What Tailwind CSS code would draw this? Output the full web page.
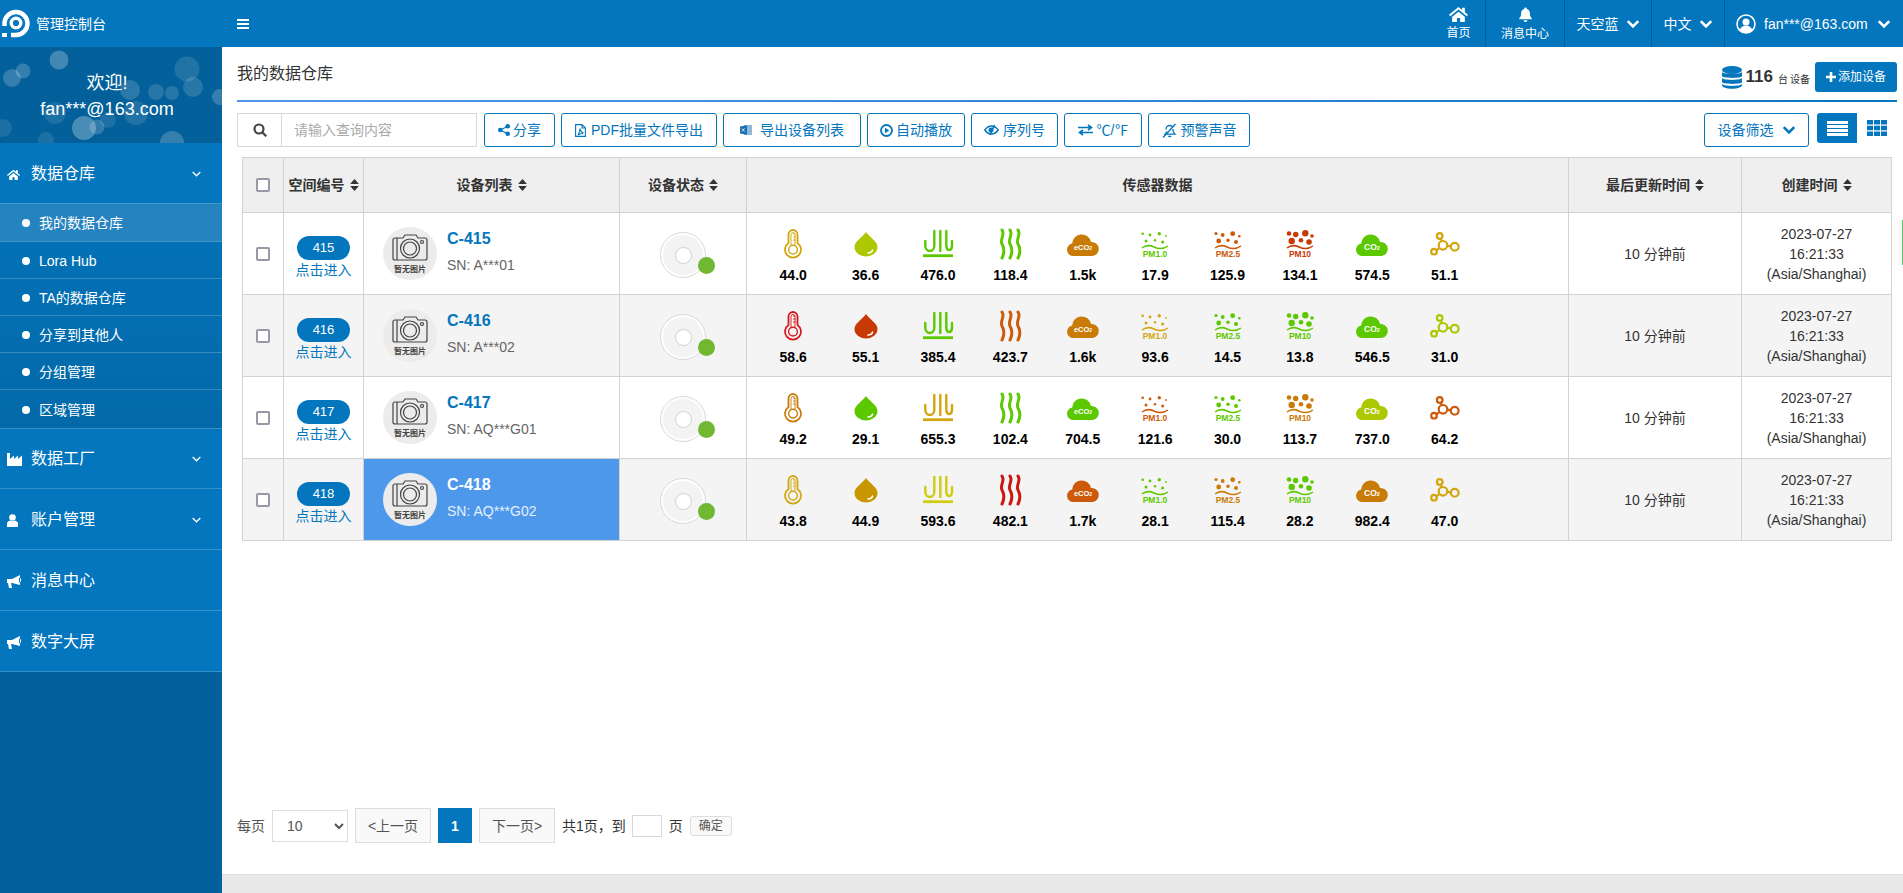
<!DOCTYPE html>
<html lang="zh-CN">
<head>
    <meta charset="UTF-8">
    <meta name="viewport" content="width=device-width, initial-scale=1.0">
    <title>管理控制台</title>
    <script src="https://cdn.jsdelivr.net/npm/@tailwindcss/browser@4"></script>
</head>
<body class="h-screen overflow-hidden flex flex-col bg-white text-sm text-[#333] font-['Liberation_Sans','Noto_Sans_CJK_SC',sans-serif]">

    <!-- sensor icons, coloured through currentColor -->
    <svg class="hidden" xmlns="http://www.w3.org/2000/svg">
        <symbol id="i-temp" viewBox="0 0 36 36">
            <path d="M13.5 17V8.5a4.5 4.5 0 0 1 9 0V17a8 8 0 1 1-9 0z" fill="none" stroke="currentColor" stroke-width="1.8"/>
            <circle cx="18" cy="23.6" r="4.4" fill="none" stroke="currentColor" stroke-width="1.4"/>
            <path d="M16 19V8.5a2 2 0 0 1 4 0V19M18 8h2.5M18 11h2.5M18 14h2.5" fill="none" stroke="currentColor" stroke-width=".9"/>
        </symbol>
        <symbol id="i-drop" viewBox="0 0 36 36">
            <path d="M18 6C15 11 6.500 15 6.500 21a11.500 9.500 0 0 0 23 0C29.500 15 21 11 18 6z" fill="currentColor"/>
            <path d="M20 27c2 0 3.800-.8 4.600-2.800" fill="none" stroke="#fff" stroke-width="1.600" stroke-linecap="round"/>
        </symbol>
        <symbol id="i-tvoc" viewBox="0 0 36 36">
            <path d="M14.300 5v15a4.500 5 0 0 1-9 0v-5M20.300 5v20M26.300 5v15a2.900 5 0 0 0 5.700 0v-5" fill="none" stroke="currentColor" stroke-width="2.400" stroke-linecap="round"/>
            <rect x="3" y="28.300" width="30" height="2.800" fill="currentColor"/>
        </symbol>
        <symbol id="i-heat" viewBox="0 0 36 36">
            <path d="M10 4c3.500 4.500-2.500 9 0 14 2.500 4.500 2.500 9 0 14M18 4c3.500 4.500-2.500 9 0 14 2.500 4.500 2.500 9 0 14M26 4c3.500 4.500-2.500 9 0 14 2.500 4.500 2.500 9 0 14" fill="none" stroke="currentColor" stroke-width="3" stroke-linecap="round"/>
        </symbol>
        <symbol id="i-eco2" viewBox="0 0 36 36">
            <path d="M8.500 30a6.300 6.300 0 0 1-1.300-12.500A9.500 9.500 0 0 1 26 16a7 7 0 0 1 1.500 14z" fill="currentColor"/>
            <text x="18" y="24" text-anchor="middle" fill="#fff" font-size="7.500" font-weight="700">eCO<tspan font-size="5">2</tspan></text>
        </symbol>
        <symbol id="i-co2" viewBox="0 0 36 36">
            <path d="M8.500 30a6.300 6.300 0 0 1-1.300-12.500A9.500 9.500 0 0 1 26 16a7 7 0 0 1 1.500 14z" fill="currentColor"/>
            <text x="18" y="24" text-anchor="middle" fill="#fff" font-size="8.500" font-weight="700">CO<tspan font-size="5.500">2</tspan></text>
        </symbol>
        <symbol id="i-pm1" viewBox="0 0 36 36">
            <g fill="currentColor"><circle cx="5.700" cy="7.700" r="1.300"/><circle cx="13" cy="9" r="1.400"/><circle cx="22.300" cy="7.700" r="1.700"/><circle cx="29" cy="10" r=".9"/><circle cx="9" cy="15" r="1.500"/><circle cx="18" cy="14.300" r="1.200"/><circle cx="25.700" cy="16" r="1.500"/></g>
            <path d="M5 22c4-3 8-3 12-1s9 2.500 14-1" fill="none" stroke="currentColor" stroke-width="1.500"/>
            <text x="18" y="31" text-anchor="middle" fill="currentColor" font-size="8.500" font-weight="700">PM1.0</text>
        </symbol>
        <symbol id="i-pm25" viewBox="0 0 36 36">
            <g fill="currentColor"><circle cx="6" cy="7.500" r="1.600"/><circle cx="12.700" cy="9" r="1.900"/><circle cx="22.700" cy="7.700" r="2.400"/><circle cx="29.300" cy="10.300" r="1.300"/><circle cx="8.700" cy="15" r="2.400"/><circle cx="18" cy="14.300" r="1.700"/><circle cx="26" cy="16" r="2"/></g>
            <path d="M5 22c4-3 8-3 12-1s9 2.500 14-1" fill="none" stroke="currentColor" stroke-width="1.500"/>
            <text x="18" y="31" text-anchor="middle" fill="currentColor" font-size="8.500" font-weight="700">PM2.5</text>
        </symbol>
        <symbol id="i-pm10" viewBox="0 0 36 36">
            <g fill="currentColor"><circle cx="7" cy="7.500" r="2.300"/><circle cx="13.700" cy="8.500" r="2.700"/><circle cx="23.300" cy="7.300" r="3.200"/><circle cx="30" cy="10" r="1.800"/><circle cx="9.700" cy="15" r="3.200"/><circle cx="19" cy="14.300" r="2.300"/><circle cx="27" cy="16" r="2.800"/></g>
            <path d="M5 22c4-3 8-3 12-1s9 2.500 14-1" fill="none" stroke="currentColor" stroke-width="1.500"/>
            <text x="18" y="31" text-anchor="middle" fill="currentColor" font-size="8.500" font-weight="700">PM10</text>
        </symbol>
        <symbol id="i-link" viewBox="0 0 36 36">
            <g fill="none" stroke="currentColor" stroke-width="2.200">
                <circle cx="12.700" cy="10" r="2.800"/><circle cx="16" cy="19.300" r="4.300"/><circle cx="27.700" cy="20.700" r="3.900"/><circle cx="7" cy="25.700" r="2.800"/>
                <path d="M13.700 12.700l1 2.500M20.300 19.800l3.500.4M9.500 24.300l3-2.300"/>
            </g>
        </symbol>
        <symbol id="i-noimg" viewBox="0 0 54 53">
            <g fill="none" stroke="#444" stroke-width="1.200">
                <path d="M12 11h8l2-3h11l2 3h7a2 2 0 0 1 2 2v18a2 2 0 0 1-2 2H12a2 2 0 0 1-2-2V13a2 2 0 0 1 2-2z"/>
                <circle cx="27" cy="21.500" r="9.500"/><circle cx="27" cy="21.500" r="6.500"/><circle cx="39" cy="15" r="1.500"/>
                <path d="M14 11v22"/>
            </g>
            <text x="27" y="44.500" text-anchor="middle" fill="#444" font-size="8" font-weight="700">暂无图片</text>
        </symbol>
    </svg>

    <header class="h-[47px] shrink-0 flex items-stretch bg-[#0376bd] text-white">
        <div class="w-[222px] flex items-center">
            <svg class="w-[32px] h-[47px]" viewBox="0 0 32 47" fill="none">
                <path d="M4.500 26V23.500A11.500 11.500 0 1 1 16 35H11" stroke="#fff" stroke-width="4.500"/>
                <circle cx="16" cy="23" r="4.800" stroke="#fff" stroke-width="3.400"/>
                <path d="M2 33h5v4H2z" fill="#fff"/>
            </svg>
            <span class="ml-[4px]">管理控制台</span>
        </div>
        <div class="flex items-center pl-[15px]">
            <svg class="w-[12px] h-[10px]" viewBox="0 0 12 10" fill="#fff"><path d="M0 0h12v2H0zM0 4h12v2H0zM0 8h12v2H0z"/></svg>
        </div>
        <nav class="ml-auto flex items-stretch">
            <a class="w-[54px] flex flex-col items-center justify-center border-r border-[#035f9c]">
                <svg class="w-[19px] h-[16px]" viewBox="0 0 24 20" fill="#fff"><path d="M12 1 0 11l1.500 1.800L12 4.300l10.500 8.500L24 11l-4-3.300V2h-3.500v2.800zM4 13.500V20h6v-5h4v5h6v-6.500L12 7z"/></svg>
                <span class="text-xs mt-[4px] leading-[15px]">首页</span>
            </a>
            <a class="w-[79px] flex flex-col items-center justify-center border-r border-[#035f9c]">
                <svg class="w-[15px] h-[17px]" viewBox="0 0 24 24" fill="#fff"><path d="M12 1a2 2 0 0 0-2 2.200C6.800 4 5 6.600 5 10c0 4.500-1 6-3 8v1.500h20V18c-2-2-3-3.500-3-8 0-3.400-1.800-6-5-6.800A2 2 0 0 0 12 1zM9 21a3 3 0 0 0 6 0z"/></svg>
                <span class="text-xs mt-[4px] leading-[15px]">消息中心</span>
            </a>
            <a class="w-[87px] flex items-center justify-center gap-[7px] border-r border-[#035f9c]">
                天空蓝
                <svg class="w-[14px] h-[14px]" viewBox="0 0 24 24" fill="none" stroke="#fff" stroke-width="4.500"><path d="M3 7l9 9 9-9"/></svg>
            </a>
            <a class="w-[73px] flex items-center justify-center gap-[7px] border-r border-[#035f9c]">
                中文
                <svg class="w-[14px] h-[14px]" viewBox="0 0 24 24" fill="none" stroke="#fff" stroke-width="4.500"><path d="M3 7l9 9 9-9"/></svg>
            </a>
            <a class="w-[178px] flex items-center pl-[11px] gap-[7px]">
                <svg class="w-[20px] h-[20px]" viewBox="0 0 20 20"><circle cx="10" cy="10" r="9" fill="none" stroke="#fff" stroke-width="1.600"/><circle cx="10" cy="8" r="3.500" fill="#fff"/><path d="M3.800 16c.8-3 3.200-4.500 6.200-4.500s5.400 1.500 6.200 4.500A8.500 8.500 0 0 1 3.800 16z" fill="#fff"/></svg>
                <span class="ml-[1px]">fan***@163.com</span>
                <svg class="w-[14px] h-[14px] ml-[2px]" viewBox="0 0 24 24" fill="none" stroke="#fff" stroke-width="4.500"><path d="M3 7l9 9 9-9"/></svg>
            </a>
        </nav>
    </header>

    <div class="flex-1 flex min-h-0">
        <aside class="w-[222px] shrink-0 bg-[#03609a] text-white">
            <div class="relative h-[96px] overflow-hidden bg-[#03609a] flex flex-col items-center justify-center pt-[1px] pr-[8px] text-[18px] leading-[26px]">
                <svg id="bubbles" class="absolute inset-0 w-[222px] h-[96px]" viewBox="0 0 222 96"></svg>
                <span class="relative">欢迎!</span>
                <span class="relative">fan***@163.com</span>
            </div>
            <div class="h-[60px] flex items-center bg-[#0376bd] pl-[7px] pr-[21px] pt-[2px] text-base">
                <svg class="w-[13px] h-[11px] mr-[11px]" viewBox="0 0 24 20" fill="#fff"><path d="M12 1 0 11l1.500 1.800L12 4.300l10.500 8.500L24 11l-4-3.300V2h-3.500v2.800zM4 13.500V20h6v-5h4v5h6v-6.500L12 7z"/></svg>
                数据仓库
                <svg class="ml-auto w-[9px] h-[6px]" viewBox="0 0 9 6" fill="none" stroke="#fff" stroke-width="1.300"><path d="M.7 1l3.800 3.800L8.300 1"/></svg>
            </div>
            <ul class="bg-linear-to-b from-[#0373b8] to-[#0369a9]">
                <li class="h-[39px] flex items-center pl-[22px] pt-[1px] gap-[9px] bg-[#2583c0] border-y border-white/15"><i class="w-[8px] h-[8px] rounded-full bg-white"></i>我的数据仓库</li>
                <li class="h-[37px] flex items-center pl-[22px] pt-[2px] gap-[9px] border-b border-white/20"><i class="w-[8px] h-[8px] rounded-full bg-white"></i>Lora Hub</li>
                <li class="h-[37px] flex items-center pl-[22px] pt-[2px] gap-[9px] border-b border-white/20"><i class="w-[8px] h-[8px] rounded-full bg-white"></i>TA的数据仓库</li>
                <li class="h-[37px] flex items-center pl-[22px] pt-[2px] gap-[9px] border-b border-white/20"><i class="w-[8px] h-[8px] rounded-full bg-white"></i>分享到其他人</li>
                <li class="h-[37px] flex items-center pl-[22px] pt-[2px] gap-[9px] border-b border-white/20"><i class="w-[8px] h-[8px] rounded-full bg-white"></i>分组管理</li>
                <li class="h-[38px] flex items-center pl-[22px] pt-[2px] gap-[9px]"><i class="w-[8px] h-[8px] rounded-full bg-white"></i>区域管理</li>
            </ul>
            <div class="h-[61px] flex items-center bg-[#0376bd] pl-[7px] pr-[21px] pt-[1px] text-base border-y border-white/20">
                <svg class="w-[15px] h-[13px] mr-[9px]" viewBox="0 0 15 13" fill="#fff"><path d="M0 0h3v6l4-3.500V6l4-3.500V6l4-3.500V13H0z"/></svg>
                数据工厂
                <svg class="ml-auto w-[9px] h-[6px]" viewBox="0 0 9 6" fill="none" stroke="#fff" stroke-width="1.300"><path d="M.7 1l3.800 3.800L8.300 1"/></svg>
            </div>
            <div class="h-[61px] flex items-center bg-[#0376bd] pl-[7px] pr-[21px] pt-[2px] text-base border-b border-white/20">
                <svg class="w-[11px] h-[13px] mr-[13px]" viewBox="0 0 11 13" fill="#fff"><circle cx="5.500" cy="3.500" r="3.300"/><path d="M0 13V9.500C0 7.500 2 7 3 6.500c1.500 1 3.500 1 5 0 1 .5 3 1 3 3V13z"/></svg>
                账户管理
                <svg class="ml-auto w-[9px] h-[6px]" viewBox="0 0 9 6" fill="none" stroke="#fff" stroke-width="1.300"><path d="M.7 1l3.800 3.800L8.300 1"/></svg>
            </div>
            <div class="h-[61px] flex items-center bg-[#0376bd] pl-[7px] pt-[2px] text-base border-b border-white/20">
                <svg class="w-[14px] h-[13px] mr-[10px]" viewBox="0 0 14 13" fill="#fff"><path d="M0 4h5l8-4v10L5 8H4l1 5H2L1 8H0zM12 2.500v5l2-1v-3z"/></svg>
                消息中心
            </div>
            <div class="h-[61px] flex items-center bg-[#0376bd] pl-[7px] pt-[2px] text-base border-b border-white/20">
                <svg class="w-[14px] h-[13px] mr-[10px]" viewBox="0 0 14 13" fill="#fff"><path d="M0 4h5l8-4v10L5 8H4l1 5H2L1 8H0zM12 2.500v5l2-1v-3z"/></svg>
                数字大屏
            </div>
        </aside>

        <main class="flex-1 min-w-0 flex flex-col">
            <div class="flex-1 flex flex-col pl-[15px] pr-[6px] min-h-0">
                <div class="h-[53px] flex items-end justify-between">
                    <h1 class="text-base leading-[24px] mb-[14px]">我的数据仓库</h1>
                    <div class="flex items-center mb-[8px]">
                        <svg class="w-[20px] h-[23px]" viewBox="0 0 20 23" fill="#0376bd"><ellipse cx="10" cy="4" rx="10" ry="4"/><path d="M0 6c2 2.500 18 2.500 20 0v4c0 2.500-20 2.500-20 0zM0 12c2 2.500 18 2.500 20 0v4c0 2.500-20 2.500-20 0zM0 18c2 2.500 18 2.500 20 0v1c0 5-20 5-20 0z"/></svg>
                        <b class="text-[17px] ml-[4px]">116</b>
                        <span class="text-[10px] ml-[5px] mt-[5px] leading-[14px]">台</span>
                        <span class="text-[10px] ml-[2px] mt-[5px] leading-[14px]">设备</span>
                        <button class="w-[82px] h-[30px] ml-[5px] bg-[#0376bd] text-white text-xs rounded-[3px] flex items-center justify-center gap-[2px]">
                            <svg class="w-[10px] h-[10px]" viewBox="0 0 10 10" fill="#fff"><path d="M3.700 0h2.600v3.700H10v2.600H6.300V10H3.700V6.300H0V3.700h3.700z"/></svg>
                            添加设备
                        </button>
                    </div>
                </div>
                <div class="h-[2px] bg-linear-to-r from-[#4d98ea] to-[#0376bd]"></div>

                <div class="mt-[11px] h-[34px] flex items-center text-[#0376bd]">
                    <div class="w-[240px] h-[34px] flex border border-[#d5d8e0]">
                        <div class="w-[44px] flex items-center justify-center border-r border-[#d5d8e0]">
                            <svg class="w-[14px] h-[14px]" viewBox="0 0 14 14" fill="none" stroke="#444" stroke-width="2.200"><circle cx="6" cy="6" r="4.500"/><path d="M9.500 9.500l3.800 3.800"/></svg>
                        </div>
                        <input class="flex-1 min-w-0 px-[12px] text-sm outline-none placeholder:text-[#aaa]" placeholder="请输入查询内容">
                    </div>
                    <div class="ml-[7px] flex gap-[6px]">
                        <button class="w-[71px] h-[34px] border border-[#0376bd] rounded-[3px] flex items-center justify-center gap-[3px]">
                            <svg class="w-[12px] h-[12px]" viewBox="0 0 12 12" fill="#0376bd"><circle cx="2.300" cy="6" r="2.300"/><circle cx="9.700" cy="2.300" r="2.300"/><circle cx="9.700" cy="9.700" r="2.300"/><path d="M2.300 6l7.400-3.700M2.300 6l7.400 3.700" stroke="#0376bd" stroke-width="1.200"/></svg>
                            分享
                        </button>
                        <button class="w-[156px] h-[34px] border border-[#0376bd] rounded-[3px] flex items-center justify-center gap-[5px]">
                            <svg class="w-[11px] h-[13px]" viewBox="0 0 11 13" fill="none" stroke="#0376bd" stroke-width="1.100"><path d="M.6.6h6.500l3.300 3.300v8.500H.6zM7 .6v3.400h3.400"/><path d="M5 4.500c.5 3 1.500 4 3.500 4.800-2 0-4 .5-5.500 1.700 1-1.500 2-3.700 2-6.500z"/></svg>
                            PDF批量文件导出
                        </button>
                        <button class="w-[138px] h-[34px] border border-[#0376bd] rounded-[3px] flex items-center justify-center gap-[8px]">
                            <svg class="w-[12px] h-[12px]" viewBox="0 0 12 12"><path d="M4 1h8v10H4z" fill="#8fb8dc"/><path d="M0 2.500l7-1.200v9.400L0 9.500z" fill="#1f6fb0"/><path d="M2 4.500l2.500 3M4.500 4.500l-2.500 3" stroke="#fff" stroke-width=".8"/></svg>
                            导出设备列表
                        </button>
                        <button class="w-[98px] h-[34px] border border-[#0376bd] rounded-[3px] flex items-center justify-center gap-[3px]">
                            <svg class="w-[13px] h-[13px]" viewBox="0 0 13 13"><circle cx="6.500" cy="6.500" r="5.500" fill="none" stroke="#0376bd" stroke-width="1.800"/><path d="M5 3.700l4.300 2.800L5 9.300z" fill="#0376bd"/></svg>
                            自动播放
                        </button>
                        <button class="w-[87px] h-[34px] border border-[#0376bd] rounded-[3px] flex items-center justify-center gap-[4px]">
                            <svg class="w-[15px] h-[12px]" viewBox="0 0 15 12" fill="none" stroke="#0376bd" stroke-width="1.400"><path d="M.8 6C3 3 5 2 7.500 2S12 3 14.200 6c-2.200 3-4.200 4-6.700 4S3 9 .8 6z"/><circle cx="7" cy="6" r="1.800" fill="#0376bd"/><path d="M10.500 1L6 11" stroke-width="1.600"/></svg>
                            序列号
                        </button>
                        <button class="w-[78px] h-[34px] border border-[#0376bd] rounded-[3px] flex items-center justify-center gap-[4px]">
                            <svg class="w-[15px] h-[12px]" viewBox="0 0 15 12" fill="none" stroke="#0376bd" stroke-width="1.600"><path d="M0 3.500h13M10 1l3.500 2.500L10 6M15 8.500H2M5 6L1.500 8.500 5 11"/></svg>
                            ℃/℉
                        </button>
                        <button class="w-[102px] h-[34px] border border-[#0376bd] rounded-[3px] flex items-center justify-center gap-[4px]">
                            <svg class="w-[15px] h-[15px]" viewBox="0 0 15 15" fill="none" stroke="#0376bd" stroke-width="1.300"><path d="M4 6.500C4 4 5.500 2.500 7.500 2.500c1 0 2 .3 2.800 1.200M11 6v1c0 2 .7 3 2 4.200H5M2 11.200h1.500c.8-.8 1-1.700 1-2.700M6.500 12.700a1.300 1.300 0 0 0 2.500 0M1 14.500L13.500 1"/></svg>
                            预警声音
                        </button>
                    </div>
                    <div class="ml-auto flex items-start h-[34px]">
                        <button class="w-[105px] h-[34px] mr-[8px] border border-[#0376bd] rounded-[3px] flex items-center justify-center gap-[8px]">
                            设备筛选
                            <svg class="w-[14px] h-[14px]" viewBox="0 0 24 24" fill="none" stroke="#0376bd" stroke-width="4.500"><path d="M3 7l9 9 9-9"/></svg>
                        </button>
                        <div class="w-[40px] h-[30px] rounded-l-[3px] bg-[#0376bd] flex items-center justify-center">
                            <svg class="w-[21px] h-[15px]" viewBox="0 0 21 15" fill="#fff"><path d="M0 0h21v3H0zM0 4h21v3H0zM0 8h21v3H0zM0 12h21v3H0z"/></svg>
                        </div>
                        <div class="w-[40px] h-[30px] flex items-center justify-center">
                            <svg class="w-[20px] h-[16px]" viewBox="0 0 20 16" fill="#0376bd"><path d="M0 0h6v4.500H0zM7 0h6v4.500H7zM14 0h6v4.500h-6zM0 5.700h6v4.500H0zM7 5.700h6v4.500H7zM14 5.700h6v4.500h-6zM0 11.400h6V16H0zM7 11.400h6V16H7zM14 11.400h6V16h-6z"/></svg>
                        </div>
                    </div>
                </div>

                <div class="mt-[10px] ml-[5px] w-[1649px]">
                    <table class="w-[1649px] table-fixed border-collapse">
                        <colgroup>
                            <col class="w-[41px]"><col class="w-[80px]"><col class="w-[256px]"><col class="w-[127px]"><col class="w-[822px]"><col class="w-[173px]"><col class="w-[150px]">
                        </colgroup>
                        <thead>
                            <tr class="h-[55px] bg-[#efefef] font-bold">
                                <th class="border border-[#d2d2d2] p-0"><i class="block mx-auto w-[14px] h-[14px] border-2 border-[#9a98a8] rounded-[2px] bg-white"></i></th>
                                <th class="border border-[#d2d2d2] p-0"><span class="inline-flex items-center gap-[5px]">空间编号<svg class="w-[9px] h-[12px]" viewBox="0 0 8 11" fill="#333"><path d="M4 0l4 4.500H0zM4 11L0 6.500h8z"/></svg></span></th>
                                <th class="border border-[#d2d2d2] p-0"><span class="inline-flex items-center gap-[5px]">设备列表<svg class="w-[9px] h-[12px]" viewBox="0 0 8 11" fill="#333"><path d="M4 0l4 4.500H0zM4 11L0 6.500h8z"/></svg></span></th>
                                <th class="border border-[#d2d2d2] p-0"><span class="inline-flex items-center gap-[5px]">设备状态<svg class="w-[9px] h-[12px]" viewBox="0 0 8 11" fill="#333"><path d="M4 0l4 4.500H0zM4 11L0 6.500h8z"/></svg></span></th>
                                <th class="border border-[#d2d2d2] p-0">传感器数据</th>
                                <th class="border border-[#d2d2d2] p-0"><span class="inline-flex items-center gap-[5px]">最后更新时间<svg class="w-[9px] h-[12px]" viewBox="0 0 8 11" fill="#333"><path d="M4 0l4 4.500H0zM4 11L0 6.500h8z"/></svg></span></th>
                                <th class="border border-[#d2d2d2] p-0"><span class="inline-flex items-center gap-[5px]">创建时间<svg class="w-[9px] h-[12px]" viewBox="0 0 8 11" fill="#333"><path d="M4 0l4 4.500H0zM4 11L0 6.500h8z"/></svg></span></th>
                            </tr>
                        </thead>
                        <tbody id="deviceRows"></tbody>
                    </table>
                </div>

                <div class="mt-auto mb-[31px] flex items-center text-[#555]">
                    <span class="w-[35px]">每页</span>
                    <select class="w-[76px] h-[32px] pl-[10px] border border-[#ddd] bg-white text-[#555] outline-none"><option>10</option></select>
                    <button class="w-[76px] h-[35px] ml-[7px] border border-[#ddd] bg-[#f9f9f9]">&lt;上一页</button>
                    <button class="w-[34px] h-[35px] ml-[7px] bg-[#0376bd] text-white font-bold">1</button>
                    <button class="w-[76px] h-[35px] ml-[7px] border border-[#ddd] bg-[#f9f9f9]">下一页&gt;</button>
                    <span class="ml-[7px] text-[#333]">共1页，</span>
                    <span class="text-[#333]">到</span>
                    <input class="w-[30px] h-[22px] ml-[6px] border border-[#d5d8e0] outline-none">
                    <span class="ml-[7px] text-[#333]">页</span>
                    <button class="w-[42px] h-[20px] ml-[7px] border border-[#ddd] rounded-[3px] bg-[#f9f9f9] text-xs">确定</button>
                </div>
            </div>
            <footer class="h-[19px] shrink-0 bg-[#e8e8e8] border-t border-[#e0e0e0]"></footer>
        </main>
    </div>

    <!-- feedback tab peeking from the right edge -->
    <div class="fixed right-0 top-[220px] w-[1px] h-[45px] bg-[#5cc87a] shadow-[0_0_6px_rgba(0,0,0,.35)]"></div>

    <script>
        // Welcome panel bubbles: x, y, radius, opacity
        const bubbles = [
            [59,13,9.5,.25],[12,31,9,.2],[23,24,7.5,.2],[187,22,12.5,.12],[193,40,10,.15],[130,43,10,.16],[156,45,8,.14],[172,46,7,.14],[220,50,8,.2],
            [3,81,9,.1],[55,66,11,.1],[84,81,12,.28],[97,80,7.5,.18],[108,73,8,.1],[136,66,12,.12],[46,93,8,.1],[172,96,12,.2]
        ];
        document.getElementById('bubbles').innerHTML = bubbles.map(([x, y, r, o]) =>
            `<circle cx="${x}" cy="${y}" r="${r}" fill="#fff" fill-opacity="${o}"/>`).join('');

        // Sensor colours by level
        const G = '#5cc800', L = '#adc800', Y = '#d3a50f', B = '#c99600', C = '#cfcc10',
              O = '#c97b08', D = '#cc5a0a', R = '#c83a05', T = '#d81820', H = '#c81810';
        const sensors = ['i-temp', 'i-drop', 'i-tvoc', 'i-heat', 'i-eco2', 'i-pm1', 'i-pm25', 'i-pm10', 'i-co2', 'i-link'];
        const devices = [
            { id: 415, name: 'C-415', sn: 'A***01', values: ['44.0','36.6','476.0','118.4','1.5k','17.9','125.9','134.1','574.5','51.1'], colors: [Y,L,G,G,O,G,D,R,G,Y] },
            { id: 416, name: 'C-416', sn: 'A***02', values: ['58.6','55.1','385.4','423.7','1.6k','93.6','14.5','13.8','546.5','31.0'], colors: [T,R,G,D,O,Y,G,G,G,L] },
            { id: 417, name: 'C-417', sn: 'AQ***G01', values: ['49.2','29.1','655.3','102.4','704.5','121.6','30.0','113.7','737.0','64.2'], colors: [O,G,Y,G,G,D,G,O,L,D] },
            { id: 418, name: 'C-418', sn: 'AQ***G02', values: ['43.8','44.9','593.6','482.1','1.7k','28.1','115.4','28.2','982.4','47.0'], colors: [Y,B,C,H,D,G,O,G,O,Y], selected: true }
        ];

        document.getElementById('deviceRows').innerHTML = devices.map((d, i) => `
            <tr class="h-[82px] ${i % 2 ? 'bg-[#f4f4f4]' : 'bg-white'}">
                <td class="border border-[#d2d2d2] p-0"><i class="block mx-auto w-[14px] h-[14px] border-2 border-[#9a98a8] rounded-[2px] bg-white"></i></td>
                <td class="border border-[#d2d2d2] p-0 pt-[9px] text-center">
                    <div class="mx-auto w-[53px] h-[24px] leading-[24px] rounded-full bg-[#0376bd] text-white text-[13px]">${d.id}</div>
                    <div class="text-[#0376bd] leading-[20px]">点击进入</div>
                </td>
                <td class="border border-[#d2d2d2] p-0 ${d.selected ? 'bg-[#4d98ea]' : ''}">
                    <div class="flex items-center pl-[19px]">
                        <svg class="w-[54px] h-[53px] rounded-full bg-[#ececec]"><use href="#i-noimg"></use></svg>
                        <div class="ml-[10px] mb-[5px]">
                            <div class="text-base font-bold leading-[22px] ${d.selected ? 'text-white' : 'text-[#0376bd]'}">${d.name}</div>
                            <div class="mt-[5px] leading-[20px] ${d.selected ? 'text-white/85' : 'text-[#666]'}">SN: ${d.sn}</div>
                        </div>
                    </div>
                </td>
                <td class="border border-[#d2d2d2] p-0 pt-[3px]">
                    <div class="relative mx-auto w-[46px] h-[46px] rounded-full bg-white border border-[#d8d8d8] flex items-center justify-center">
                        <div class="w-[40px] h-[40px] rounded-full bg-[#f3f3f3] flex items-center justify-center">
                            <i class="w-[17px] h-[17px] rounded-full bg-white border border-[#d0d0d0]"></i>
                        </div>
                        <i class="absolute left-[37px] top-[24px] w-[17px] h-[17px] rounded-full bg-[#70b832]"></i>
                    </div>
                </td>
                <td class="border border-[#d2d2d2] p-0 pt-[2px]">
                    <div class="flex pl-[10px]">
                        ${d.values.map((v, n) => `
                            <div class="w-[72.4px] flex flex-col items-center">
                                <svg class="w-[36px] h-[36px]" style="color:${d.colors[n]}"><use href="#${sensors[n]}"></use></svg>
                                <b class="mt-[4px] leading-[18px] text-black">${v}</b>
                            </div>`).join('')}
                    </div>
                </td>
                <td class="border border-[#d2d2d2] p-0 text-center">10 分钟前</td>
                <td class="border border-[#d2d2d2] p-0 text-center leading-[20px]">2023-07-27<br>16:21:33<br>(Asia/Shanghai)</td>
            </tr>`).join('');
    </script>
</body>
</html>
